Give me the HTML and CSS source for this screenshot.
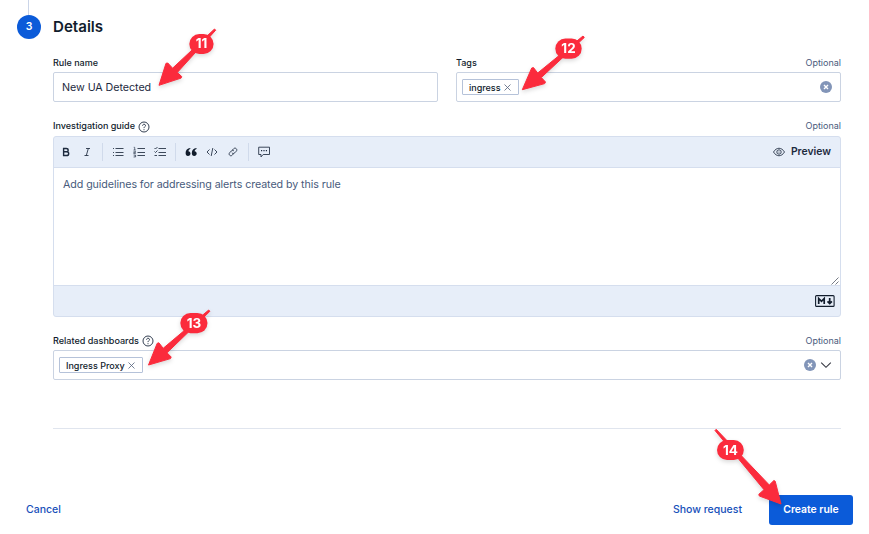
FILE: index.html
```html
<!DOCTYPE html>
<html lang="en">
<head>
<meta charset="utf-8">
<title>Create rule</title>
<link rel="stylesheet" href="styles.css">
</head>
<body>
<main class="page">
  <section class="step">
    <div class="rail"><i class="rail-line"></i><span class="step-number">3</span></div>
    <div class="content">
      <h2>Details</h2>
      <div class="columns">
        <div class="field">
          <div class="label-row"><label>Rule name</label></div>
          <div class="control text-control">New UA Detected</div>
        </div>
        <div class="field">
          <div class="label-row"><label>Tags</label><span class="optional">Optional</span></div>
          <div class="control combo">
            <span class="pill tag-pill">ingress<svg width="7" height="7" viewBox="0 0 7 7"><path d="M.5.5l6 6m0-6l-6 6"/></svg></span>
            <svg class="clear" width="12" height="12" viewBox="0 0 12 12"><circle cx="6" cy="6" r="6"/><path d="M4 4l4 4m0-4L4 8"/></svg>
          </div>
        </div>
      </div>
      <div class="field guide">
        <div class="label-row"><label>Investigation guide</label><svg class="help" width="12" height="12" viewBox="0 0 12 12"><circle cx="6" cy="6" r="5"/><path d="M4.6 4.700c0-2 2.900-1.900 2.900-.1C7.500 5.700 6 5.700 6 7.100M6 8.200v1"/></svg><span class="optional">Optional</span></div>
        <div class="editor">
          <div class="toolbar">
            <svg class="icon" width="12" height="12" viewBox="0 0 12 12"><path class="bold" d="M3.600 2.500h2.600c2.600 0 2.600 3.300 0 3.300H3.600zM3.600 5.800h3c2.800 0 2.800 3.700 0 3.700h-3z"/></svg>
            <svg class="icon" width="12" height="12" viewBox="0 0 12 12"><path d="M5 2.500h4M3.500 9.500h4M7.300 2.500l-2 7"/></svg>
            <i class="divider"></i>
            <svg class="icon" width="12" height="12" viewBox="0 0 12 12"><path d="M3.500 2.500h8M3.500 6.500h8M3.500 9.500h8M1 2.500h1M1 6.500h1M1 9.500h1"/></svg>
            <svg class="icon" width="12" height="12" viewBox="0 0 12 12"><path d="M4.500 2.500H12M4.500 6.500H12M4.500 9.500H12"/><path class="fine" d="M.7 1.300h1V4M.5 4h2.300M.5 5.300h2v1.200H.7v1h2.100M.5 9h2.100v2H.5m.7-1h1.400"/></svg>
            <svg class="icon" width="12" height="12" viewBox="0 0 12 12"><path d="M4.500 2.500H12M4.500 6.500H12M4.500 9.500H12M.5 2l1 1 2-2M.5 5.500l1 1 2-2M.5 9.500h2.500"/></svg>
            <i class="divider"></i>
            <svg class="icon" width="12" height="12" viewBox="0 0 12 12"><path class="solid" d="M5.300 2C2.400 2.400.6 4.200.6 7c0 1.900.9 3 2.400 3s2.500-1 2.500-2.400c0-1.300-.9-2.300-2.100-2.300.1-1.100.8-1.900 1.900-2.300zm6.200 0C8.600 2.400 6.800 4.200 6.800 7c0 1.900.9 3 2.400 3s2.500-1 2.500-2.400c0-1.300-.9-2.300-2.100-2.300.1-1.100.8-1.900 1.900-2.300z"/></svg>
            <svg class="icon" width="12" height="12" viewBox="0 0 12 12"><path d="M3.500 3.500L1 6l2.500 2.500M8.500 3.500L11 6 8.500 8.500M6.800 2l-1.600 8"/></svg>
            <svg class="icon" width="12" height="12" viewBox="0 0 12 12"><path d="M5.200 4.200l1.500-1.500c1.700-1.700 4.200.8 2.600 2.500L7.600 6.900c-.9.900-2.100.7-2.700-.1M6.700 7.600L5.200 9.200c-1.700 1.700-4.200-.8-2.500-2.500L4.300 5c.9-.9 2.100-.7 2.700.1"/></svg>
            <i class="divider"></i>
            <svg class="icon" width="12" height="12" viewBox="0 0 12 12"><path d="M.7 1.200h10.800v7.300H5.200L3 10.900V8.500H.7z"/><path class="dots" d="M3 4.600h1.200m1.200 0h1.200m1.200 0H9"/></svg>
            <div class="preview"><svg class="icon" width="12" height="12" viewBox="0 0 12 12"><path d="M.5 6c3-5 8-5 11 0-3 5-8 5-11 0z"/><circle cx="6" cy="6" r="2.200"/><circle class="solid" cx="6" cy="6" r=".5"/></svg><span>Preview</span></div>
          </div>
          <div class="textarea"><span>Add guidelines for addressing alerts created by this rule</span><svg class="resize" width="8" height="8" viewBox="0 0 8 8"><path d="M.5 7.500l7-7M4.500 7.500l3-3"/></svg></div>
          <div class="editor-footer"><svg width="20" height="12" viewBox="0 0 20 12"><rect x=".6" y=".6" width="18.500" height="10.800" rx="1"/><path class="mark" d="M3.700 9V3.500L6.500 6.300l2.700-2.800V9"/><path class="mark" d="M14.700 3v5M12.500 6.300l2.200 2.300 2.200-2.300"/></svg></div>
        </div>
      </div>
      <div class="field dashboards">
        <div class="label-row"><label>Related dashboards</label><svg class="help" width="12" height="12" viewBox="0 0 12 12"><circle cx="6" cy="6" r="5"/><path d="M4.600 4.700c0-2 2.900-1.900 2.900-.1C7.500 5.700 6 5.700 6 7.100M6 8.200v1"/></svg><span class="optional">Optional</span></div>
        <div class="control combo dash-combo">
          <span class="pill dash-pill">Ingress Proxy<svg width="7" height="7" viewBox="0 0 7 7"><path d="M.5.5l6 6m0-6l-6 6"/></svg></span>
          <svg class="clear" width="12" height="12" viewBox="0 0 12 12"><circle cx="6" cy="6" r="6"/><path d="M4 4l4 4m0-4L4 8"/></svg>
          <svg class="chevron" width="12" height="12" viewBox="0 0 12 12"><path d="M1.200 3.700L6 8.300l4.800-4.600"/></svg>
        </div>
      </div>
      <hr>
    </div>
  </section>
  <footer>
    <a class="cancel">Cancel</a>
    <a class="request">Show request</a>
    <button>Create rule</button>
  </footer>
</main>
<svg class="annotations" width="869" height="534" viewBox="0 0 869 534">
  <g><path d="M159 85.300l7-22 1.800-.3 4.800 5.200L214.500 29l1.200 1.200L177.300 72.500l4.400 4-.6 1.600z"/><rect x="189.300" y="34" width="24.300" height="20" rx="10"/><text x="201.500" y="48.300">11</text></g>
  <g><path d="M522.300 89.700l9.400-21.700 1.800-.4 4.200 5.400L583 36l1.300 1.500L541.300 77.500l4.200 4.500-.8 1.600z"/><rect x="555.300" y="38.600" width="26.400" height="20.200" rx="10.100"/><text x="568.500" y="53.300">12</text></g>
  <g><path d="M148.500 365l8.700-21.700 1.700-.5 4.300 5.500L208.700 310l1.200 1.300L167 352.800l4.200 4.200-.7 1.600z"/><rect x="180.300" y="313" width="27.200" height="20.200" rx="10.100"/><text x="194" y="327.800">13</text></g>
  <g><path d="M781 504l-21.700-8-.5-1.700 5.200-4.600L715 430.500l1.200-1.200L769.300 485l4.600-4.500 1.300.7z"/><rect x="717" y="440" width="26.800" height="20" rx="10"/><text x="730.400" y="454.600">14</text></g>
</svg>
</body>
</html>
```
FILE: styles.css
```css
* { box-sizing: border-box; }
body { margin: 0; background: #fff; color: #1d2a3e; font-family: Inter, "Liberation Sans", sans-serif; font-size: 10.7px; overflow: hidden; }
svg { display: block; flex: none; fill: none; }
.page { width: 869px; height: 534px; display: flex; flex-direction: column; }
.step { display: flex; padding: 0 28px 0 17px; height: 429px; }
.rail { width: 36px; }
.rail-line { display: block; width: 1px; height: 15px; margin-left: 11px; background: #cbd5e8; }
.step-number { display: flex; align-items: center; justify-content: center; width: 24px; height: 24px; padding-bottom: 1px; border-radius: 50%; background: #0b5bd9; color: #fff; font-size: 10.5px; font-weight: 600; }
.content { width: 788px; display: flex; flex-direction: column; }
h2 { margin: 17px 0 0; height: 37px; font-size: 15.1px; line-height: 20px; font-weight: 600; color: #111c2c; }
.columns { display: grid; grid-template-columns: 385px 385px; gap: 18px; }
.label-row { height: 18px; padding-bottom: 1px; display: flex; align-items: center; font-size: 9.05px; }
label { font-weight: 500; color: #111c2c; }
.columns label { font-size: 9px; }
.optional { margin-left: auto; font-size: 9px; color: #485b7c; }
.help { margin: 2px 0 0 3px; stroke: #1d2a3e; stroke-width: .9; }
.control { height: 30px; border: 1px solid #cad3e2; border-radius: 2px; display: flex; align-items: center; }
.text-control { padding-left: 8px; font-size: 10.7px; letter-spacing: -.05px; }
.combo { padding: 0 8px 0 5px; }
.pill { height: 16px; border: 1px solid #b5c2d9; border-radius: 1px; display: flex; align-items: center; justify-content: space-between; padding: 0 7px 0 6px; font-size: 9px; font-weight: 500; color: #111c2c; }
.tag-pill { width: 57px; }
.dash-pill { width: 84px; }
.pill svg { stroke: #53617a; stroke-width: .8; }
.clear { margin-left: auto; }
.clear circle { fill: #8295b8; }
.clear path { stroke: #fff; stroke-width: 1.4; }
.chevron { margin-left: 4px; stroke: #343741; stroke-width: 1.1; }
.guide { margin-top: 15px; }
.guide .label-row { height: 19px; padding-bottom: 3px; }
.guide .help { margin-top: 3px; }
.editor { height: 181px; border: 1px solid #d5deee; border-radius: 3px; background: #e7eef9; overflow: hidden; }
.toolbar { height: 30px; display: flex; align-items: center; padding: 0 9px 0 6px; gap: 9px; }
.icon { stroke: #1d2a3e; stroke-width: .85; }
.bold { stroke-width: 1.4; }
.fine { stroke-width: .6; }
.dots { stroke-width: 1.1; }
.solid { fill: #111c2c; stroke: none; }
.divider { width: 1px; height: 18px; background: #d0daeb; }
.preview { margin-left: auto; display: flex; align-items: center; gap: 6px; font-size: 10.4px; font-weight: 600; color: #1d2a3e; }
.preview span { padding-bottom: 1px; }
.textarea { height: 119px; background: #fff; border-top: 1px solid #d5deee; border-bottom: 1px solid #d5deee; padding: 9px 1px 0 9px; display: flex; justify-content: space-between; line-height: 16px; font-size: 10.7px; letter-spacing: -.08px; color: #485b7c; }
.resize { align-self: flex-end; stroke: #535966; stroke-width: .8; }
.editor-footer { height: 30px; display: flex; align-items: center; justify-content: flex-end; padding-right: 5px; }
.editor-footer rect { stroke: #111c2c; stroke-width: 1.1; }
.mark { stroke: #111c2c; stroke-width: 1.7; }
.dashboards { margin-top: 15px; }
.dashboards .label-row { padding-bottom: 2px; }
hr { margin: 48px 0 0; border: 0; height: 1px; flex: none; background: #e0e5ee; }
footer { height: 96px; display: flex; align-items: flex-end; padding: 0 16px 0 26px; font-size: 10.5px; font-weight: 500; color: #1750ba; line-height: 30px; }
.request { margin-left: auto; margin-right: 27px; }
button { width: 84px; height: 30px; border: 0; border-radius: 3px; background: #0b5bd9; color: #fff; font: 600 10.4px Inter, sans-serif; padding: 0 0 1px; }
.annotations { position: absolute; left: 0; top: 0; pointer-events: none; }
.annotations g { fill: #fb2b3c; filter: drop-shadow(0 2px 2px rgb(0 0 0 / .15)); }
.annotations path { stroke: #fb2b3c; stroke-width: 1; stroke-linejoin: round; }
.annotations text { fill: #fff; font-size: 13.5px; font-weight: 700; text-anchor: middle; }
```
